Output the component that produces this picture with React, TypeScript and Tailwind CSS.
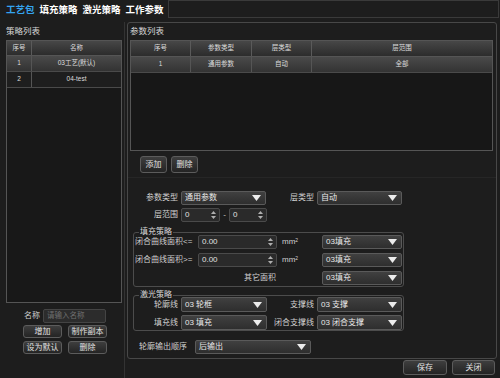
import React from "react";

const Arrow = () => (
  <svg width="9" height="6" viewBox="0 0 9 6">
    <path d="M0 0h9L4.5 6z" fill="#ececec" />
  </svg>
);

const Select = ({ value, w, h = "h-[14px]" }: { value: string; w: string; h?: string }) => (
  <div
    className={`${w} ${h} flex items-center justify-between pl-[3px] pr-[4px] rounded-[2px] border border-[#5a5a5a] bg-gradient-to-b from-[#404040] to-[#2e2e2e] text-[8px] text-[#e8e8e8]`}
  >
    <span>{value}</span>
    <Arrow />
  </div>
);

const Spin = ({ value, w }: { value: string; w: string }) => (
  <div
    className={`${w} h-[14px] flex items-center justify-between pl-[3px] pr-[3px] rounded-[2px] border border-[#4a4a4a] bg-[#2a2a2a] text-[8px] text-[#e0e0e0]`}
  >
    <span>{value}</span>
    <div className="flex flex-col gap-[2px]">
      <svg width="5" height="3" viewBox="0 0 5 3">
        <path d="M0 3h5L2.5 0z" fill="#b0b0b0" />
      </svg>
      <svg width="5" height="3" viewBox="0 0 5 3">
        <path d="M0 0h5L2.5 3z" fill="#b0b0b0" />
      </svg>
    </div>
  </div>
);

const Btn = ({ children, w, h = "h-[14px]" }: { children: React.ReactNode; w: string; h?: string }) => (
  <div
    className={`${w} ${h} flex items-center justify-center rounded-[3px] border border-[#5c5c5c] bg-gradient-to-b from-[#3e3e3e] to-[#242424] text-[8px] text-[#e2e2e2]`}
  >
    {children}
  </div>
);

const Label = ({ children, w }: { children: React.ReactNode; w: string }) => (
  <div className={`${w} text-right text-[8px] text-[#d0d0d0] pr-[1px]`}>{children}</div>
);

const Group = ({ title, children, cls }: { title: string; children: React.ReactNode; cls: string }) => (
  <div className={`relative w-[271px] rounded-[3px] border border-[#4c4c4c] ${cls}`}>
    <span className="absolute -top-[6px] left-[5px] bg-[#1d1d1d] px-[1px] text-[8px] leading-[10px] text-[#d8d8d8]">
      {title}
    </span>
    {children}
  </div>
);

const leftRows = [
  { no: "1", name: "03工艺(默认)" },
  { no: "2", name: "04-test" },
];

export default function App() {
  return (
    <div className="w-[500px] h-[378px] bg-[#1d1d1d] flex flex-col overflow-hidden font-['Liberation_Sans','Noto_Sans_CJK_SC',sans-serif] text-[#d8d8d8] leading-none">
      {/* tab bar */}
      <div className="h-[19px] flex items-stretch">
        <div className="flex items-center gap-[5px] pl-[6px] pr-[4px] text-[9.5px] font-bold text-white">
          <span className="text-[#34a4f0]">工艺包</span>
          <span>填充策略</span>
          <span>激光策略</span>
          <span>工作参数</span>
        </div>
        <div className="flex-1 mr-[1px] border border-[#3a3a3a] h-[18px]" />
      </div>

      <div className="flex flex-1 pt-[3px]">
        {/* left panel */}
        <div className="w-[125px] border-r border-[#333] pl-[6px] flex flex-col">
          <div className="h-[18px] flex items-center text-[8.5px] text-[#d8d8d8]">策略列表</div>
          <div className="w-[116px] h-[263px] border border-[#555] bg-[#181818] flex flex-col">
            <div className="h-[15px] flex text-[6.5px] text-[#dcdcdc] bg-gradient-to-b from-[#474747] to-[#2c2c2c] border-b border-[#555]">
              <div className="w-[25px] flex items-center justify-center border-r border-[#5a5a5a]">序号</div>
              <div className="flex-1 flex items-center justify-center">名称</div>
            </div>
            {leftRows.map((r, i) => (
              <div
                key={r.no}
                className={`h-[16px] flex text-[6.5px] text-[#dcdcdc] border-b border-[#4a4a4a] ${
                  i === 0 ? "bg-gradient-to-b from-[#4a4a4a] to-[#333]" : "bg-[#1e1e1e]"
                }`}
              >
                <div className="w-[25px] flex items-center justify-center border-r border-[#555]">{r.no}</div>
                <div className="flex-1 flex items-center justify-center">{r.name}</div>
              </div>
            ))}
          </div>
          <div className="mt-[6px] flex items-center">
            <div className="w-[36px] text-right pr-[2px] text-[8px] text-[#cfcfcf]">名称</div>
            <div className="w-[63px] h-[14px] ml-[1px] rounded-[2px] border border-[#444] bg-[#2c2c2c] flex items-center pl-[3px] text-[7.5px] text-[#707070]">
              请输入名称
            </div>
          </div>
          <div className="mt-[2px] ml-[17px] flex gap-[6px]">
            <Btn w="w-[39px]" h="h-[13px]">增加</Btn>
            <Btn w="w-[39px]" h="h-[13px]">制作副本</Btn>
          </div>
          <div className="mt-[3px] ml-[17px] flex gap-[6px]">
            <Btn w="w-[39px]" h="h-[13px]">设为默认</Btn>
            <Btn w="w-[39px]" h="h-[13px]">删除</Btn>
          </div>
        </div>

        {/* right column */}
        <div className="ml-[2px] w-[370px] flex flex-col">
          <div className="h-[337px] rounded-[3px] border border-[#484848] pl-[2px] pr-[3px] flex flex-col">
            <div className="h-[17px] flex items-center text-[8.5px] text-[#d8d8d8]">参数列表</div>
            <div className="h-[111px] border border-[#555] bg-[#171717] flex flex-col">
              <div className="h-[16px] flex text-[6.5px] text-[#dcdcdc] bg-gradient-to-b from-[#474747] to-[#2c2c2c] border-b border-[#555]">
                <div className="w-[60px] flex items-center justify-center border-r border-[#5a5a5a]">序号</div>
                <div className="w-[61px] flex items-center justify-center border-r border-[#5a5a5a]">参数类型</div>
                <div className="w-[60px] flex items-center justify-center border-r border-[#5a5a5a]">层类型</div>
                <div className="flex-1 flex items-center justify-center">层范围</div>
              </div>
              <div className="h-[16px] flex text-[6.5px] text-[#dcdcdc] bg-gradient-to-b from-[#4a4a4a] to-[#333] border-b border-[#4a4a4a]">
                <div className="w-[60px] flex items-center justify-center border-r border-[#555]">1</div>
                <div className="w-[61px] flex items-center justify-center border-r border-[#555]">通用参数</div>
                <div className="w-[60px] flex items-center justify-center border-r border-[#555]">自动</div>
                <div className="flex-1 flex items-center justify-center">全部</div>
              </div>
            </div>
            <div className="mt-[5px] ml-[10px] flex gap-[4px]">
              <Btn w="w-[27px]" h="h-[17px]">添加</Btn>
              <Btn w="w-[27px]" h="h-[17px]">删除</Btn>
            </div>
            <div className="mt-[4px] -ml-[2px] -mr-[3px] h-px bg-[#262626]" />

            {/* form */}
            <div className="pl-[3px] flex flex-col">
              <div className="mt-[13px] flex items-center">
                <Label w="w-[46px]">参数类型</Label>
                <div className="ml-[2px]">
                  <Select w="w-[85px]" value="通用参数" />
                </div>
                <Label w="w-[49px]">层类型</Label>
                <div className="ml-[2px]">
                  <Select w="w-[85px]" value="自动" />
                </div>
              </div>
              <div className="mt-[3px] flex items-center">
                <Label w="w-[46px]">层范围</Label>
                <div className="ml-[2px]">
                  <Spin w="w-[39px]" value="0" />
                </div>
                <div className="w-[9px] text-center text-[8px] text-[#cfcfcf]">-</div>
                <Spin w="w-[38px]" value="0" />
              </div>

              <Group title="填充策略" cls="mt-[10px] pt-[2px] pb-[1px] flex flex-col gap-[4px]">
                <div className="flex items-center">
                  <div className="w-[63px] pl-[1px] text-[8px] text-[#d0d0d0] whitespace-nowrap">闭合曲线面积&lt;=</div>
                  <div className="ml-[1px]">
                    <Spin w="w-[79px]" value="0.00" />
                  </div>
                  <div className="w-[40px] pl-[5px] text-[8px] text-[#d0d0d0]">
                    mm<sup className="text-[5px]">2</sup>
                  </div>
                  <div className="ml-[5px]">
                    <Select w="w-[80px]" value="03填充" />
                  </div>
                </div>
                <div className="flex items-center">
                  <div className="w-[63px] pl-[1px] text-[8px] text-[#d0d0d0] whitespace-nowrap">闭合曲线面积&gt;=</div>
                  <div className="ml-[1px]">
                    <Spin w="w-[79px]" value="0.00" />
                  </div>
                  <div className="w-[40px] pl-[5px] text-[8px] text-[#d0d0d0]">
                    mm<sup className="text-[5px]">2</sup>
                  </div>
                  <div className="ml-[5px]">
                    <Select w="w-[80px]" value="03填充" />
                  </div>
                </div>
                <div className="flex items-center">
                  <div className="w-[143px] pr-[1px] text-right text-[8px] text-[#d0d0d0]">其它面积</div>
                  <div className="ml-[45px]">
                    <Select w="w-[80px]" value="03填充" />
                  </div>
                </div>
              </Group>

              <Group title="激光策略" cls="mt-[8px] pt-[1px] flex flex-col gap-[3px]">
                <div className="flex items-center">
                  <Label w="w-[45px]">轮廓线</Label>
                  <div className="ml-[2px]">
                    <Select w="w-[86px]" h="h-[15px]" value="03 轮框" />
                  </div>
                  <Label w="w-[48px]">支撑线</Label>
                  <div className="ml-[2px]">
                    <Select w="w-[85px]" h="h-[15px]" value="03 支撑" />
                  </div>
                </div>
                <div className="flex items-center">
                  <Label w="w-[45px]">填充线</Label>
                  <div className="ml-[2px]">
                    <Select w="w-[86px]" h="h-[15px]" value="03 填充" />
                  </div>
                  <Label w="w-[48px]">闭合支撑线</Label>
                  <div className="ml-[2px]">
                    <Select w="w-[85px]" h="h-[15px]" value="03 闭合支撑" />
                  </div>
                </div>
              </Group>

              <div className="mt-[9px] flex items-center">
                <div className="w-[56px] pl-[6px] text-[8px] text-[#d0d0d0] whitespace-nowrap">轮廓输出顺序</div>
                <div className="ml-[6px]">
                  <Select w="w-[116px]" value="后输出" />
                </div>
              </div>
            </div>
          </div>
          <div className="mt-[1px] flex justify-end gap-[5px] pr-[2px]">
            <Btn w="w-[44px]" h="h-[15px]">保存</Btn>
            <Btn w="w-[43px]" h="h-[15px]">关闭</Btn>
          </div>
        </div>
      </div>
    </div>
  );
}
